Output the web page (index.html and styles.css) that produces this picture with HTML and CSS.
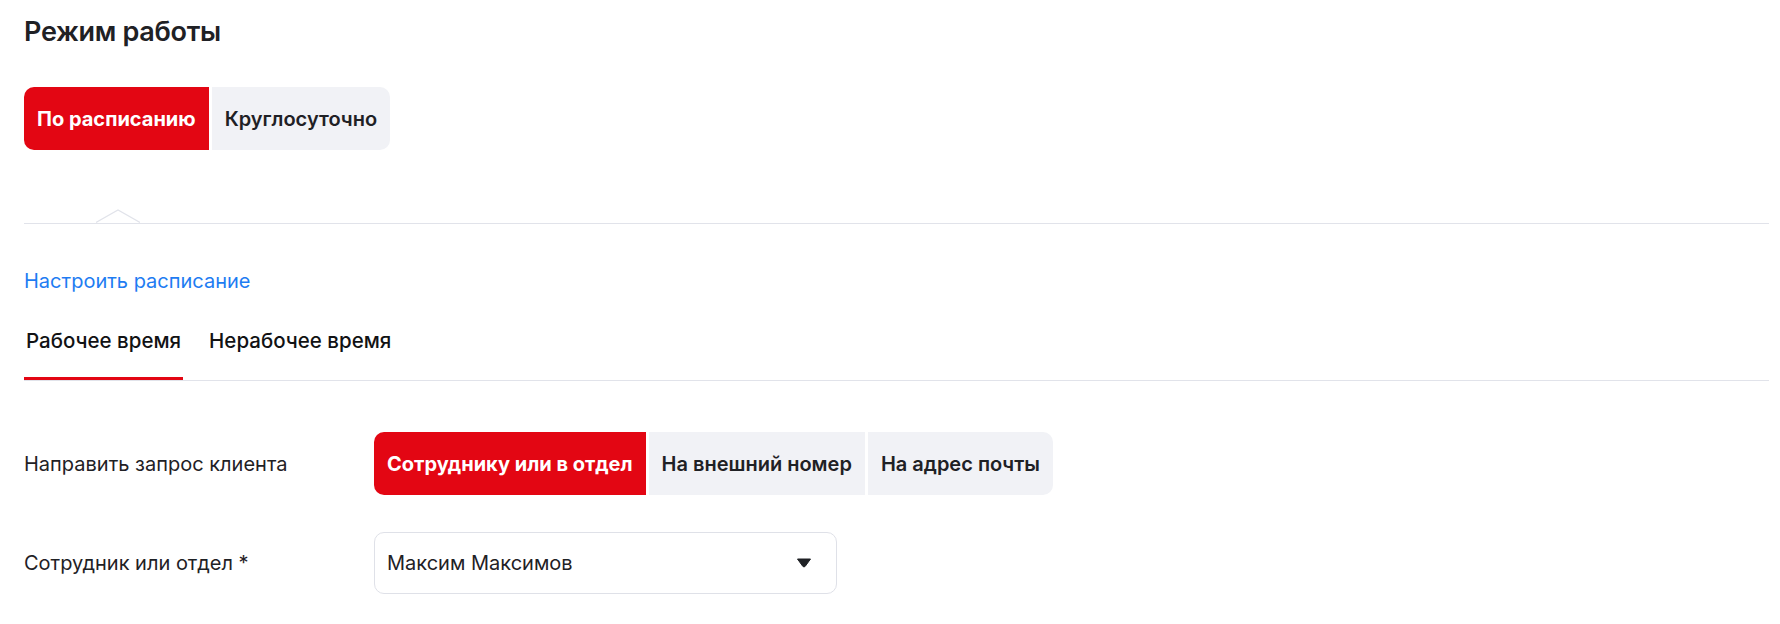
FILE: index.html
```html
<!DOCTYPE html>
<html lang="ru">
<head>
<meta charset="utf-8">
<link rel="stylesheet" href="styles.css">
</head>
<body>
<main class="page">
  <h1 class="title">Режим работы</h1>

  <div class="segmented seg-mode">
    <button class="seg-btn active">По расписанию</button>
    <button class="seg-btn">Круглосуточно</button>
  </div>

  <div class="divider">
    <svg class="notch" width="44" height="15" viewBox="0 0 44 15">
      <polygon points="0,14 22,1.5 44,14" fill="#fff"/>
      <polyline points="0,13.5 22,1 44,13.5" fill="none" stroke="#e1e3ea" stroke-width="1.2"/>
    </svg>
  </div>

  <a class="link" href="#">Настроить расписание</a>

  <nav class="tabs">
    <span class="tab active">Рабочее время</span>
    <span class="tab">Нерабочее время</span>
  </nav>

  <div class="form">
    <div class="row">
      <div class="label">Направить запрос клиента</div>
      <div class="segmented seg-target">
        <button class="seg-btn active">Сотруднику или в отдел</button>
        <button class="seg-btn">На внешний номер</button>
        <button class="seg-btn">На адрес почты</button>
      </div>
    </div>
    <div class="row">
      <div class="label">Сотрудник или отдел *</div>
      <div class="select">
        <span class="select-value">Максим Максимов</span>
        <svg class="select-arrow" width="16" height="10" viewBox="0 0 16 10">
          <path d="M1.5 1 H14.5 L9.3 8.2 Q8 9.8 6.7 8.2 Z" fill="#1f2125" stroke="#1f2125" stroke-width="1" stroke-linejoin="round"/>
        </svg>
      </div>
    </div>
  </div>
</main>
</body>
</html>
```

FILE: styles.css
```css
* { box-sizing: border-box; }

html, body {
  margin: 0;
  padding: 0;
  background: #ffffff;
}

body {
  font-family: Inter, "Noto Sans", sans-serif;
  color: #1f2125;
}

.page {
  padding: 16px 11px 0 24px;
}

.title {
  margin: 0;
  font-size: 27px;
  line-height: 32px;
  font-weight: 600;
  letter-spacing: -0.3px;
}

.segmented {
  display: flex;
  gap: 3px;
}

.seg-mode {
  margin-top: 39px;
}

.seg-btn {
  font-family: inherit;
  border: 0;
  margin: 0;
  height: 63px;
  padding: 0 13px;
  background: #f1f2f6;
  color: #1f2125;
  font-size: 20px;
  font-weight: 600;
  line-height: 24px;
  cursor: pointer;
}

.seg-btn:first-child {
  border-radius: 10px 0 0 10px;
}

.seg-btn:last-child {
  border-radius: 0 10px 10px 0;
}

.seg-btn.active {
  background: #e30613;
  color: #ffffff;
  font-weight: 700;
}

.divider {
  position: relative;
  margin-top: 60px;
  height: 14px;
  border-bottom: 1px solid #e1e3ea;
}

.notch {
  position: absolute;
  left: 72px;
  bottom: -1px;
}

.link {
  display: block;
  margin-top: 45px;
  font-size: 20px;
  line-height: 24px;
  color: #1e7cf2;
  text-decoration: none;
}

.tabs {
  display: flex;
  gap: 24px;
  margin-top: 36px;
  border-bottom: 1px solid #e1e3ea;
}

.tab {
  padding: 0 2px 24px;
  font-size: 20.5px;
  line-height: 24px;
  font-weight: 500;
  color: #111214;
  border-bottom: 3px solid transparent;
}

.tab.active {
  border-bottom-color: #e30613;
}

.form {
  margin-top: 51px;
  display: flex;
  flex-direction: column;
  gap: 37px;
}

.row {
  display: grid;
  grid-template-columns: 350px auto;
  align-items: center;
  justify-items: start;
}

.label {
  font-size: 20px;
  line-height: 24px;
}

.select {
  width: 463px;
  height: 62px;
  border: 1px solid #dfe1e8;
  border-radius: 10px;
  padding: 0 24px 0 12px;
  display: flex;
  align-items: center;
  justify-content: space-between;
}

.select-value {
  font-size: 20px;
  line-height: 24px;
}

.select-arrow {
  display: block;
}
```
